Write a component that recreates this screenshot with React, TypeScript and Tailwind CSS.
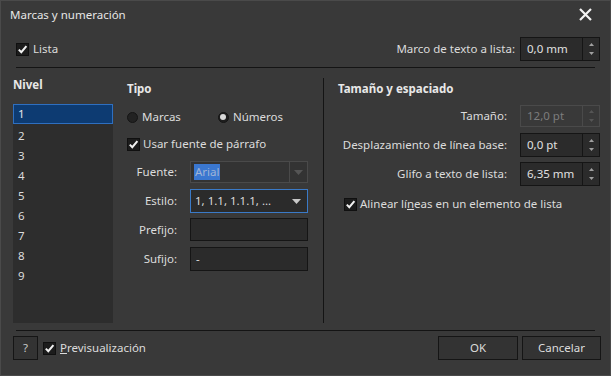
import React from "react";

const Check = ({ className = "" }: { className?: string }) => (
  <span className={"w-[13px] h-[13px] bg-[#1c1c1c] border border-[#101010] flex items-center justify-center shrink-0 " + className}>
    <svg width="11" height="11" viewBox="0 0 11 11">
      <path d="M1.8 5.6 L4.3 8.2 L9.4 2.2" stroke="#f2f2f2" strokeWidth="2" fill="none" />
    </svg>
  </span>
);

const Spin = ({ disabled = false }: { disabled?: boolean }) => (
  <div className={"w-[17px] h-full flex flex-col items-center justify-center gap-[6px] border-l " + (disabled ? "border-[#4a4a4a]" : "border-[#151515]")}>
    <svg width="5" height="3" viewBox="0 0 5 3"><path d="M0 3 L2.5 0 L5 3 Z" fill={disabled ? "#555" : "#a0a0a0"} /></svg>
    <svg width="5" height="3" viewBox="0 0 5 3"><path d="M0 0 L2.5 3 L5 0 Z" fill={disabled ? "#555" : "#a0a0a0"} /></svg>
  </div>
);

const SpinInput = ({ value, disabled = false, h = "h-[24px]" }: { value: string; disabled?: boolean; h?: string }) => (
  <div className={"w-[80px] flex border shrink-0 " + h + " " + (disabled ? "border-[#4a4a4a] bg-[#393939] text-[#7d7d7d]" : "border-[#151515] bg-[#2b2b2b] text-[#e0e0e0]")}>
    <div className="flex-1 pl-[6px] flex items-center">{value}</div>
    <Spin disabled={disabled} />
  </div>
);

const Arrow = ({ color }: { color: string }) => (
  <svg width="9" height="5" viewBox="0 0 9 5"><path d="M0 0 L4.5 5 L9 0 Z" fill={color} /></svg>
);

export default function App() {
  const levels = ["1", "2", "3", "4", "5", "6", "7", "8", "9"];
  return (
    <div
      className="w-[611px] h-[376px] bg-[#393939] border border-[#4a4a4a] text-[#dcdcdc] text-[11.5px] leading-[16px] flex flex-col overflow-hidden whitespace-nowrap"
      style={{ fontFamily: '"Noto Sans", "Open Sans", sans-serif' }}
    >
      {/* Title bar */}
      <div className="h-[27px] flex items-center justify-between pl-[9px] pr-[18px] shrink-0">
        <span className="text-[#e6e6e6]">Marcas y numeración</span>
        <svg width="13" height="13" viewBox="0 0 13 13">
          <path d="M1 1 L12 12 M12 1 L1 12" stroke="#f4f4f4" strokeWidth="2.2" />
        </svg>
      </div>

      {/* Lista row */}
      <div className="h-[24px] mt-[9px] flex items-center justify-between pl-[15px] pr-[10px] shrink-0">
        <div className="flex items-center gap-[4px]">
          <Check />
          <span>Lista</span>
        </div>
        <div className="flex items-center gap-[5px]">
          <span>Marco de texto a lista:</span>
          <SpinInput value="0,0 mm" />
        </div>
      </div>

      <div className="mt-[6px] mx-[15px] h-px bg-[#141414] shrink-0" />

      {/* Main */}
      <div className="flex h-[255px] shrink-0">
        {/* Nivel */}
        <div className="ml-[12px] w-[100px] flex flex-col">
          <div className="mt-[9px] font-bold text-[#e8e8e8]">Nivel</div>
          <div className="mt-[11px] flex-1 bg-[#2d2d2d] flex flex-col">
            {levels.map((l, i) => (
              <div
                key={l}
                className={
                  i === 0
                    ? "h-[20px] flex items-center pl-[4px] bg-[#0d3b72] border border-[#2e6fc0] text-[#e8e8e8]"
                    : "h-[20px] flex items-center pl-[5px] pt-[3px]"
                }
              >
                {l}
              </div>
            ))}
          </div>
        </div>

        {/* Tipo */}
        <div className="ml-[14px] w-[182px] flex flex-col">
          <div className="mt-[13px] font-bold text-[#e8e8e8]">Tipo</div>
          <div className="mt-[12px] flex items-center h-[16px]">
            <span className="w-[11px] h-[11px] rounded-full bg-[#222] border border-[#151515]" />
            <span className="ml-[4px]">Marcas</span>
            <span className="ml-[37px] w-[11px] h-[11px] rounded-full bg-[#1e1e1e] border border-[#151515] flex items-center justify-center">
              <span className="w-[6px] h-[6px] rounded-full bg-[#d8d8d8]" />
            </span>
            <span className="ml-[4px]">Números</span>
          </div>
          <div className="mt-[11px] flex items-center gap-[3px] h-[16px]">
            <Check />
            <span>Usar fuente de párrafo</span>
          </div>
          <div className="mt-[9px] flex items-center h-[22px]">
            <span className="w-[50px] text-right">Fuente:</span>
            <div className="ml-[13px] w-[118px] h-full flex border border-[#4a4a4a] bg-[#333333]">
              <div className="flex-1 flex items-center pl-[3px]">
                <span className="bg-[#3a77d0] text-[#9fb4d6] px-[1px]">Arial</span>
              </div>
              <div className="w-[18px] border-l border-[#4a4a4a] flex items-center justify-center">
                <Arrow color="#555" />
              </div>
            </div>
          </div>
          <div className="mt-[6px] flex items-center h-[24px]">
            <span className="w-[50px] text-right">Estilo:</span>
            <div className="ml-[13px] w-[118px] h-full flex items-center justify-between border border-[#3a7ac8] bg-[#2b2b2b] pl-[4px] pr-[6px]">
              <span>1, 1.1, 1.1.1, ...</span>
              <Arrow color="#c8c8c8" />
            </div>
          </div>
          <div className="mt-[5px] flex items-center h-[23px]">
            <span className="w-[50px] text-right">Prefijo:</span>
            <div className="ml-[13px] w-[118px] h-full border border-[#151515] bg-[#2b2b2b]" />
          </div>
          <div className="mt-[6px] flex items-center h-[24px]">
            <span className="w-[50px] text-right">Sufijo:</span>
            <div className="ml-[13px] w-[118px] h-full border border-[#151515] bg-[#2b2b2b] flex items-center pl-[5px]">-</div>
          </div>
        </div>

        {/* separator */}
        <div className="ml-[14px] mt-[10px] w-px bg-[#141414]" />

        {/* Tamaño */}
        <div className="ml-[14px] w-[262px] flex flex-col">
          <div className="mt-[13px] font-bold text-[#e8e8e8]">Tamaño y espaciado</div>
          <div className="mt-[8px] flex items-center justify-end gap-[13px]">
            <span>Tamaño:</span>
            <SpinInput value="12,0 pt" disabled h="h-[22px]" />
          </div>
          <div className="mt-[6px] flex items-center justify-end gap-[13px]">
            <span>Desplazamiento de línea base:</span>
            <SpinInput value="0,0 pt" />
          </div>
          <div className="mt-[5px] flex items-center justify-end gap-[13px]">
            <span>Glifo a texto de lista:</span>
            <SpinInput value="6,35 mm" />
          </div>
          <div className="mt-[10px] ml-[6px] flex items-center gap-[3px] h-[16px]">
            <Check />
            <span>
              Alinear lí<span className="underline">n</span>eas en un elemento de lista
            </span>
          </div>
        </div>
      </div>

      <div className="mt-[7px] mx-[15px] h-px bg-[#141414] shrink-0" />

      {/* Bottom */}
      <div className="mt-[5px] flex items-center h-[24px] pl-[12px] pr-[9px] shrink-0">
        <div className="w-[25px] h-full border border-[#151515] bg-[#333] flex items-center justify-center text-[#c8c8c8]">?</div>
        <Check className="ml-[5px]" />
        <span className="ml-[4px]">
          <span className="underline">P</span>revisualización
        </span>
        <div className="flex-1" />
        <div className="w-[80px] h-full border border-[#151515] bg-[#333333] flex items-center justify-center">OK</div>
        <div className="ml-[4px] w-[79px] h-full border border-[#151515] bg-[#333333] flex items-center justify-center">Cancelar</div>
      </div>
    </div>
  );
}
